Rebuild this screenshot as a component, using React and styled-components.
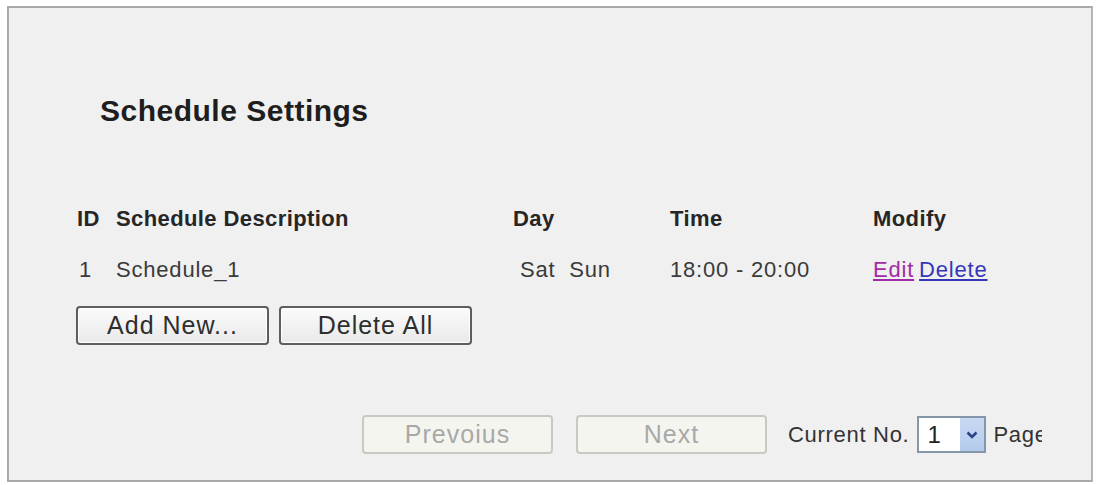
import React from "react";
import styled, { createGlobalStyle } from "styled-components";

const GlobalStyle = createGlobalStyle`
  html, body {
    margin: 0;
    padding: 0;
    background: #ffffff;
  }
  body {
    font-family: "Liberation Sans", Arial, sans-serif;
    color: #333333;
  }
`;

const Page = styled.div`
  padding: 6px 7px 3px 7px;
`;

const Panel = styled.div`
  box-sizing: border-box;
  width: 1086px;
  height: 476px;
  background: #f0f0f0;
  border: 2px solid #a9a9a9;
  border-right-color: #b4b4b4;
  padding: 85px 0 0 0;
  overflow: hidden;
`;

const Title = styled.h1`
  margin: 0 0 0 91px;
  font-size: 30px;
  line-height: 36px;
  font-weight: bold;
  color: #1e1e1e;
  letter-spacing: 0.5px;
`;

const Table = styled.div`
  margin: 75px 0 0 68px;
  display: grid;
  grid-template-columns: 39px 397px 157px 203px 200px;
  row-gap: 21px;
`;

const Cell = styled.div`
  font-size: 22px;
  line-height: 30px;
  font-weight: ${(p) => (p.$head ? "bold" : "normal")};
  letter-spacing: ${(p) => (p.$head ? "0.4px" : "0.8px")};
  color: ${(p) => (p.$head ? "#262626" : "#3a3a3a")};
  padding-left: ${(p) => p.$indent || 0}px;
  white-space: pre;
`;

const Link = styled.a`
  color: ${(p) => (p.$visited ? "#a22aa8" : "#3537b8")};
  text-decoration: underline;
  cursor: pointer;
  & + & {
    margin-left: 5px;
  }
`;

const Actions = styled.div`
  display: flex;
  gap: 10px;
  margin: 21px 0 0 67px;
`;

const Button = styled.button`
  box-sizing: border-box;
  width: 193px;
  height: 39px;
  font-family: "Liberation Sans", Arial, sans-serif;
  font-size: 25px;
  letter-spacing: 1px;
  border-radius: 4px;
  padding: 0;
  cursor: pointer;
  color: #2e2e2e;
  border: 2px solid #5d5d5d;
  background: linear-gradient(#fbfbfb, #e9e9e9);
  box-shadow: inset 0 0 0 1px #ffffff;

  &:disabled {
    color: #a8a8a8;
    border: 2px solid #c9c9c4;
    background: #f5f5f0;
    box-shadow: none;
    cursor: default;
  }
`;

const Pager = styled.div`
  display: flex;
  align-items: center;
  margin: 70px 0 0 353px;
  white-space: nowrap;
`;

const PagerButton = styled(Button)`
  width: 191px;
  margin-right: ${(p) => p.$gap}px;
`;

const Label = styled.span`
  display: inline-block;
  font-size: 22px;
  letter-spacing: 0.7px;
  color: #333333;
  width: ${(p) => (p.$clip ? `${p.$clip}px` : "auto")};
  overflow: hidden;
`;

const Select = styled.div`
  box-sizing: border-box;
  display: flex;
  align-items: stretch;
  width: 69px;
  height: 37px;
  margin: 0 7px 0 8px;
  border: 2px solid #8596a8;
  background: #ffffff;
`;

const SelectValue = styled.span`
  flex: 1;
  font-size: 24px;
  line-height: 33px;
  padding-left: 8px;
  color: #222;
`;

const SelectArrow = styled.span`
  width: 24px;
  display: flex;
  align-items: center;
  justify-content: center;
  background: linear-gradient(#c9d9f3, #b5cbed);
`;

const rows = [
  { id: 1, name: "Schedule_1", day: "Sat  Sun", time: "18:00 - 20:00" },
];

export default function App() {
  return (
    <Page>
      <GlobalStyle />
      <Panel>
        <Title>Schedule Settings</Title>
        <Table>
          <Cell $head>ID</Cell>
          <Cell $head>Schedule Description</Cell>
          <Cell $head>Day</Cell>
          <Cell $head>Time</Cell>
          <Cell $head>Modify</Cell>
          {rows.map((r) => (
            <React.Fragment key={r.id}>
              <Cell $indent={2}>{r.id}</Cell>
              <Cell>{r.name}</Cell>
              <Cell $indent={7}>{r.day}</Cell>
              <Cell>{r.time}</Cell>
              <Cell>
                <Link $visited>Edit</Link>
                <Link>Delete</Link>
              </Cell>
            </React.Fragment>
          ))}
        </Table>
        <Actions>
          <Button>Add New...</Button>
          <Button>Delete All</Button>
        </Actions>
        <Pager>
          <PagerButton disabled $gap={23}>Prevoius</PagerButton>
          <PagerButton disabled $gap={21}>Next</PagerButton>
          <Label>Current No.</Label>
          <Select>
            <SelectValue>1</SelectValue>
            <SelectArrow>
              <svg width="12" height="8" viewBox="0 0 12 8">
                <path d="M1.5 1.5 L6 6 L10.5 1.5" fill="none" stroke="#27418a" strokeWidth="2.6" />
              </svg>
            </SelectArrow>
          </Select>
          <Label $clip={49}>Page</Label>
        </Pager>
      </Panel>
    </Page>
  );
}
